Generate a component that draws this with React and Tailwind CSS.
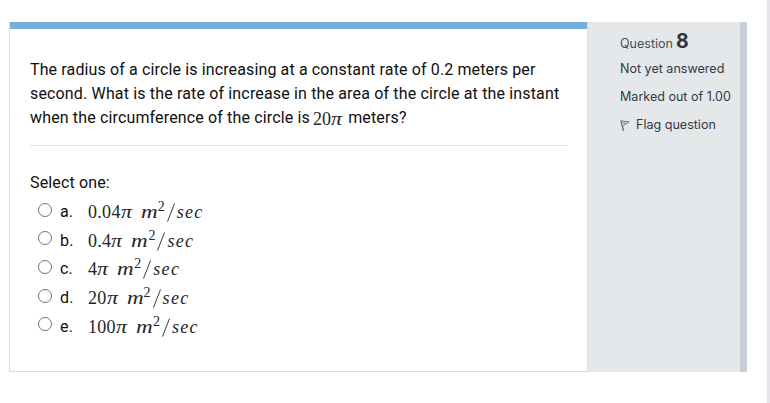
import React from 'react';

const OPTIONS = [
  { key: 'a', value: '0.04' },
  { key: 'b', value: '0.4' },
  { key: 'c', value: '4' },
  { key: 'd', value: '20' },
  { key: 'e', value: '100' },
];

function Pi() {
  return <span className="inline-block w-[11px] origin-left scale-x-[1.22] italic text-[18px]">π</span>;
}

function Formula({ value }) {
  return (
    <span className="flex items-baseline font-['Liberation_Serif',serif] text-[18px] leading-[28px] text-[#252525] whitespace-nowrap">
      <span className="tracking-[0.3px]">{value}</span>
      <Pi />
      <span className="inline-block w-[17px] ml-[9px] italic origin-left scale-x-[1.28]">m</span>
      <span className="inline-block w-[9px] text-[14px] leading-none relative -top-[7px]">2</span>
      <svg className="relative top-[4px] mr-[2px] w-[8px] shrink-0" width="8" height="19" viewBox="0 0 8 19" stroke="#252525" strokeWidth="0.9">
        <path d="M0.5 18.5 L7.5 0.5" />
      </svg>
      <span className="italic tracking-[1.3px]">sec</span>
    </span>
  );
}

function FlagIcon() {
  return (
    <svg width="10" height="13" viewBox="0 0 10 13" fill="none" stroke="#74797d" strokeWidth="1">
      <path d="M0.8 1.5 L3.6 12" strokeWidth="1.4" />
      <path d="M1 2 L9.3 2.8 L2.8 7.2 M2.6 4 L6 4.2" />
    </svg>
  );
}

export default function App() {
  return (
    <div className="flex h-[403px] w-[770px] overflow-hidden bg-white pl-[9px] pt-[22px]">
      <main className="h-[350px] w-[579px] border-b border-l border-r border-[#d9dde1] bg-white font-[Roboto,sans-serif] text-[16px] leading-[24px] text-[#0f0f0f] tracking-[0.145px]">
        <div className="h-[7px] bg-[#78aeda]" />
        <div className="ml-[20px] mr-[20px] mt-[29px] h-[88px] border-b border-[#e4e5e7] whitespace-nowrap">
          <p className="tracking-[0.13px]">The radius of a circle is increasing at a constant rate of 0.2 meters per</p>
          <p className="tracking-[0.155px]">second. What is the rate of increase in the area of the circle at the instant</p>
          <p className="flex h-[24px] items-baseline">
            <span className="relative -top-px">when the circumference of the circle is</span>
            <span className="relative top-px ml-[3px] font-['Liberation_Serif',serif] text-[18px] text-[#252525]">20<Pi /></span>
            <span className="relative -top-px ml-[6px]">meters?</span>
          </p>
        </div>
        <div className="ml-[20px] mt-[25px]">
          <p>Select one:</p>
          <div className="mt-[3px]">
            {OPTIONS.map(o => (
              <label key={o.key} className="flex h-[28.6px] items-center">
                <input type="radio" name="answer" className="mb-[5px] ml-[8px] h-[14px] w-[14px] shrink-0 appearance-none rounded-full border border-[#747474] bg-white" />
                <span className="ml-[8px] w-[28px]">{o.key}.</span>
                <Formula value={o.value} />
              </label>
            ))}
          </div>
        </div>
      </main>
      <aside className="h-[350px] w-[159px] shrink-0 border-r-[7px] border-[#c7ced7] bg-[#e4e8eb] pl-[32px] font-[Inter,sans-serif] text-[12.55px] leading-[20px] text-[#343a40] whitespace-nowrap">
        <h3 className="mt-[9px] flex h-[22px] items-baseline text-[#4a5056]">
          Question<span className="ml-[3px] text-[19.5px] font-bold text-[#2f353a]">8</span>
        </h3>
        <div className="mt-[6px]">Not yet answered</div>
        <div className="mt-[8px]">Marked out of 1.00</div>
        <div className="mt-[8px] flex items-center">
          <FlagIcon />
          <span className="ml-[6px]">Flag question</span>
        </div>
      </aside>
      <div className="-mt-[22px] ml-auto h-[403px] w-[3px] bg-[#e4e6ea]" />
    </div>
  );
}
